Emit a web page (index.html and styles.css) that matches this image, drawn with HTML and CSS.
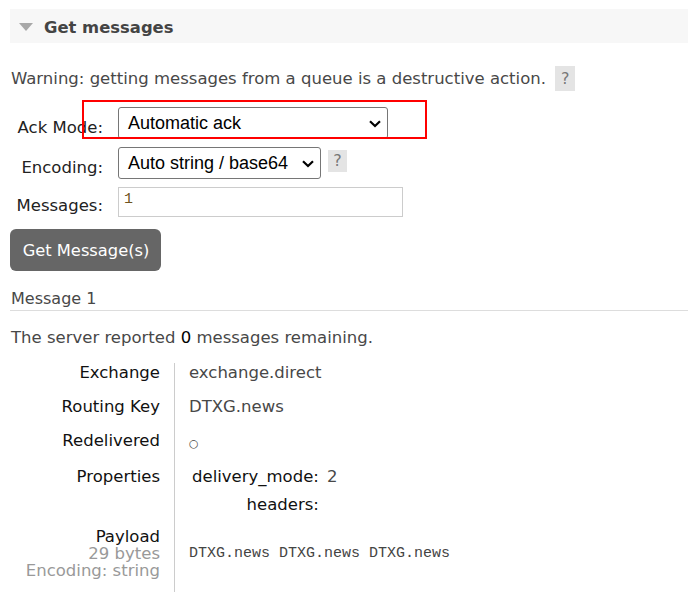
FILE: index.html
```html
<!DOCTYPE html>
<html>
<head>
<meta charset="utf-8">
<link rel="stylesheet" href="styles.css">
</head>
<body>
<div class="section">
  <h2 class="section-title"><span class="tri"></span>Get messages</h2>
  <p class="warning">Warning: getting messages from a queue is a destructive action. <span class="help help-lg">?</span></p>
  <form class="get-form">
    <label class="flabel">Ack Mode:</label>
    <div class="ctrl">
      <div class="select select-ack"><span>Automatic ack</span>
        <svg class="chev" width="12" height="8" viewBox="0 0 12 8"><path d="M1 1.2 L6 6 L11 1.2" fill="none" stroke="#000" stroke-width="2.2"/></svg>
      </div>
    </div>
    <label class="flabel">Encoding:</label>
    <div class="ctrl">
      <div class="select select-enc"><span>Auto string / base64</span>
        <svg class="chev" width="12" height="8" viewBox="0 0 12 8"><path d="M1 1.2 L6 6 L11 1.2" fill="none" stroke="#000" stroke-width="2.2"/></svg>
      </div>
      <span class="help help-sm">?</span>
    </div>
    <label class="flabel">Messages:</label>
    <div class="ctrl">
      <div class="input">1</div>
    </div>
  </form>
  <button class="btn" type="button">Get Message(s)</button>
  <h3 class="msg-title">Message 1</h3>
  <p class="remaining">The server reported <span class="num">0</span> messages remaining.</p>
  <table class="facts">
    <tr><th>Exchange</th><td>exchange.direct</td></tr>
    <tr><th>Routing Key</th><td>DTXG.news</td></tr>
    <tr><th>Redelivered</th><td><span class="circle">○</span></td></tr>
    <tr><th>Properties</th><td class="props-cell">
      <table class="props">
        <tr><th>delivery_mode:</th><td>2</td></tr>
        <tr class="last"><th>headers:</th><td></td></tr>
      </table>
    </td></tr>
    <tr class="payload-row"><th><span class="pl">Payload</span><span class="sub">29 bytes</span><span class="sub">Encoding: string</span></th><td><pre class="payload">DTXG.news DTXG.news DTXG.news</pre></td></tr>
  </table>
</div>
<div class="annot"></div>
</body>
</html>
```

FILE: styles.css
```css
html, body {
  margin: 0;
  padding: 0;
  background: #fff;
}
body {
  font-family: "DejaVu Sans", Verdana, sans-serif;
  font-size: 16.5px;
  color: #484848;
}
.section {
  padding: 9px 0 0 10px;
}
.section-title {
  margin: 0;
  height: 34px;
  box-sizing: border-box;
  padding-top: 3px;
  background: #f7f7f7;
  display: flex;
  align-items: center;
  font-size: 16.4px;
  font-weight: bold;
  color: #444;
}
.tri {
  width: 0;
  height: 0;
  margin: -2px 11px 0 9px;
  border-left: 7px solid transparent;
  border-right: 7px solid transparent;
  border-top: 8px solid #a8a8a8;
}
.warning {
  margin: 23px 0 0 1px;
  line-height: 25px;
  display: flex;
  align-items: center;
  white-space: pre;
}
.help {
  display: inline-block;
  background: #e4e4e4;
  color: #777;
  text-align: center;
  font-size: 16px;
}
.help-lg {
  width: 20px;
  height: 25px;
  line-height: 25px;
  margin-left: 4px;
}
.help-sm {
  width: 19px;
  height: 22px;
  line-height: 22px;
  margin-left: 7px;
  margin-top: 3px;
  align-self: flex-start;
}
.get-form {
  display: grid;
  grid-template-columns: 93px auto;
  grid-template-rows: 32px 32px 30px;
  column-gap: 15px;
  row-gap: 8px;
  margin-top: 16px;
}
.flabel {
  text-align: right;
  align-self: end;
  padding-bottom: 2px;
  color: #222;
  white-space: nowrap;
}
.ctrl {
  display: flex;
  align-items: stretch;
}
.select {
  position: relative;
  box-sizing: border-box;
  border: 1px solid #767676;
  border-radius: 3px;
  font-family: "Liberation Sans", Arial, sans-serif;
  font-size: 18px;
  color: #000;
  display: flex;
  align-items: center;
  padding-left: 9px;
}
.select-ack { width: 270px; }
.select-enc { width: 203px; }
.chev {
  position: absolute;
  right: 6px;
  top: 12px;
}
.input {
  box-sizing: border-box;
  width: 285px;
  height: 30px;
  border: 1px solid #ccc;
  font-family: "Liberation Mono", monospace;
  font-size: 15px;
  color: #6f5320;
  padding: 3px 0 0 5px;
}
.btn {
  margin-top: 12px;
  background: #666;
  color: #fff;
  border: none;
  border-radius: 6px;
  height: 42px;
  width: 151px;
  font-family: "DejaVu Sans", Verdana, sans-serif;
  font-size: 16.3px;
  padding: 0 0 0 1px;
}
.msg-title {
  margin: 18px 0 0 0;
  font-weight: normal;
  font-size: 16px;
  padding: 0 0 2px 1px;
  border-bottom: 1px solid #ddd;
}
.remaining {
  margin: 17px 0 0 1px;
}
.num {
  color: #000;
}
.facts {
  border-collapse: collapse;
  margin-top: 16px;
}
.facts > tbody > tr > th {
  width: 150px;
  text-align: right;
  font-weight: normal;
  color: #111;
  vertical-align: top;
  padding: 0 14px 15px 0;
  line-height: 19px;
  white-space: nowrap;
}
.facts > tbody > tr > td {
  border-left: 1px solid #ccc;
  padding: 0 14px 15px 14px;
  line-height: 19px;
  vertical-align: top;
}
.circle {
  font-size: 11px;
  position: relative;
  top: 1px;
}
.props {
  border-collapse: collapse;
}
.props th {
  text-align: right;
  font-weight: normal;
  color: #111;
  padding: 0 8px 9px 3px;
  line-height: 19px;
  white-space: nowrap;
}
.props td {
  padding: 0 0 9px 0;
  vertical-align: top;
  line-height: 19px;
}
.props tr.last th,
.props tr.last td {
  padding-bottom: 0;
}
.facts > tbody > tr > td.props-cell {
  padding-bottom: 14px;
}
.facts > tbody > tr.payload-row > th {
  padding-bottom: 13px;
}
.pl,
.sub {
  display: block;
  line-height: 17px;
  height: 17px;
}
.sub {
  color: #999;
}
.facts > tbody > tr.payload-row > td {
  vertical-align: middle;
  padding-top: 2px;
}
.payload {
  margin: 0;
  font-family: "Liberation Mono", monospace;
  font-size: 15px;
  color: #444;
}
.annot {
  position: absolute;
  left: 82px;
  top: 100px;
  width: 341px;
  height: 35px;
  border: 2px solid #f00;
}
```
